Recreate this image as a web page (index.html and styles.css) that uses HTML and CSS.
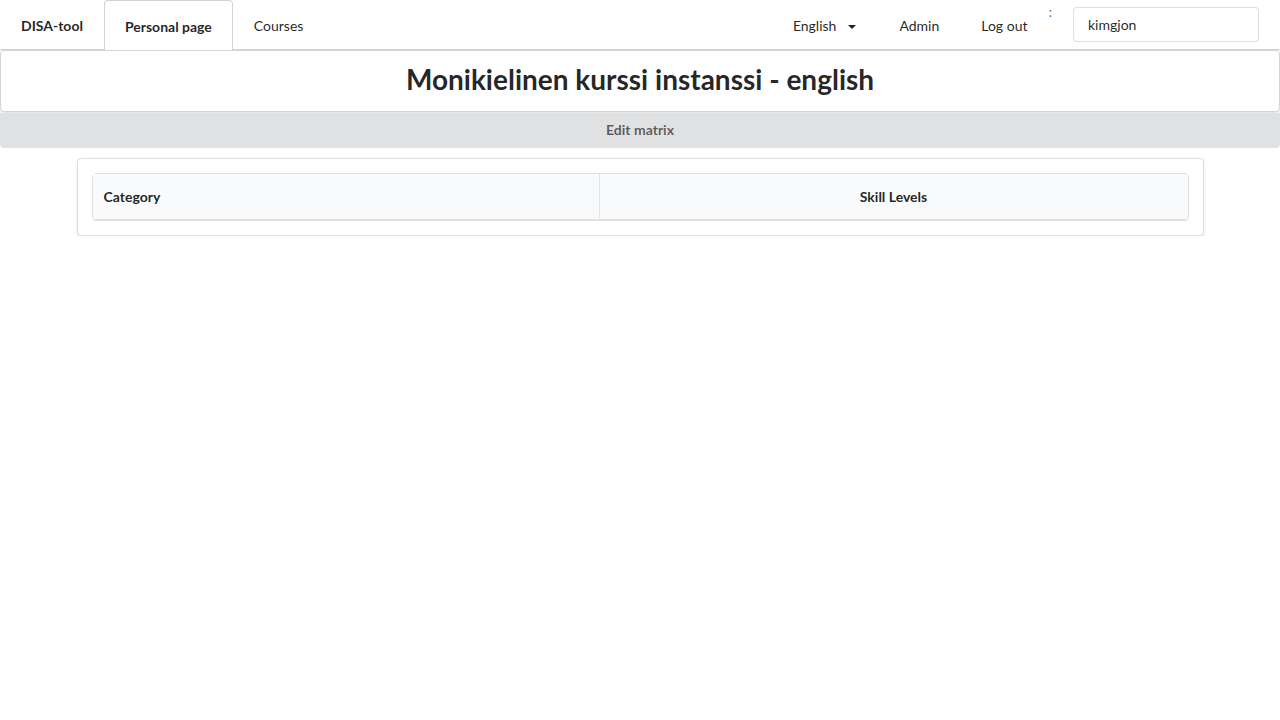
FILE: index.html
```html
<!DOCTYPE html>
<html>
<head>
<meta charset="utf-8">
<link rel="stylesheet" href="styles.css">
</head>
<body>
<nav class="menu">
  <a class="item brand">DISA-tool</a>
  <a class="item active">Personal page</a>
  <a class="item">Courses</a>
  <div class="right">
    <div class="item lang">English <span class="caret"></span></div>
    <a class="item">Admin</a>
    <a class="item">Log out</a>
    <span class="colon">:</span>
    <div class="item input-item"><input class="input" type="text" value="kimgjon"></div>
  </div>
</nav>
<div class="header-seg"><h1>Monikielinen kurssi instanssi - english</h1></div>
<div class="edit-btn">Edit matrix</div>
<div class="container">
  <div class="segment">
    <table class="table">
      <thead>
        <tr><th class="cat">Category</th><th class="skill">Skill Levels</th></tr>
      </thead>
    </table>
  </div>
</div>
</body>
</html>
```
FILE: styles.css
```css
* { box-sizing: border-box; }
body {
  margin: 0;
  font-family: Lato, "Helvetica Neue", Arial, sans-serif;
  font-size: 14px;
  color: rgba(0,0,0,.87);
  background: #fff;
}
.menu {
  display: flex;
  height: 50px;
  border-bottom: 1px solid #d4d4d5;
}
.item {
  display: flex;
  align-items: center;
  padding: 2px 20px 0;
  border: 1px solid transparent;
  border-bottom: none;
  color: rgba(0,0,0,.87);
  line-height: 1;
  cursor: pointer;
}
.brand { font-weight: 700; }
.active {
  font-weight: 700;
  background: #fff;
  border-color: #d4d4d5;
  border-radius: 4px 4px 0 0;
  margin-bottom: -1px;
  height: 50px;
}
.right {
  margin-left: auto;
  display: flex;
}
.lang { padding-right: 21px; }
.caret {
  display: inline-block;
  width: 0; height: 0;
  border-left: 4px solid transparent;
  border-right: 4px solid transparent;
  border-top: 4px solid rgba(0,0,0,.87);
  margin-left: 12px;
  margin-top: 1px;
}
.colon {
  color: #4183c4;
  font-size: 14px;
  padding: 5px 0 0 0;
  line-height: 1;
  align-self: flex-start;
}
.input-item {
  padding: 0 20px 0 20px;
}
.input {
  width: 186px;
  height: 35px;
  margin-top: -2px;
  border: 1px solid rgba(34,36,38,.15);
  border-radius: 4px;
  padding: 0 14px;
  font-family: Lato, sans-serif;
  font-size: 14px;
  color: rgba(0,0,0,.87);
  outline: none;
}
.header-seg {
  border: 1px solid #d4d4d5;
  border-radius: 4px;
  box-shadow: 0 1px 2px 0 rgba(34,36,38,.15);
  height: 62px;
  padding-bottom: 2px;
  display: flex;
  align-items: center;
  justify-content: center;
}
.header-seg h1 {
  margin: 0;
  font-size: 28px;
  font-weight: 700;
  line-height: 1.28;
  color: rgba(0,0,0,.87);
}
.edit-btn {
  margin-top: 1px;
  height: 35px;
  background: #e0e1e2;
  color: rgba(0,0,0,.6);
  font-weight: 700;
  text-align: center;
  line-height: 34px;
  border-radius: 0 0 4px 4px;
  cursor: pointer;
}
.container {
  width: 1127px;
  margin: 10px auto 0;
}
.segment {
  border: 1px solid rgba(34,36,38,.15);
  border-radius: 4px;
  box-shadow: 0 1px 2px 0 rgba(34,36,38,.15);
  padding: 14px;
}
.table {
  width: 100%;
  border-collapse: separate;
  border-spacing: 0;
  border: 1px solid rgba(34,36,38,.15);
  border-radius: 4px;
}
.table th {
  background: #f9fafb;
  height: 46px;
  padding: 0 11px;
  font-weight: 700;
  text-align: left;
  border-bottom: 1px solid rgba(34,36,38,.1);
}
.table th.cat { width: 506px; }
.table th.skill {
  text-align: center;
  border-left: 1px solid rgba(34,36,38,.1);
}
```
